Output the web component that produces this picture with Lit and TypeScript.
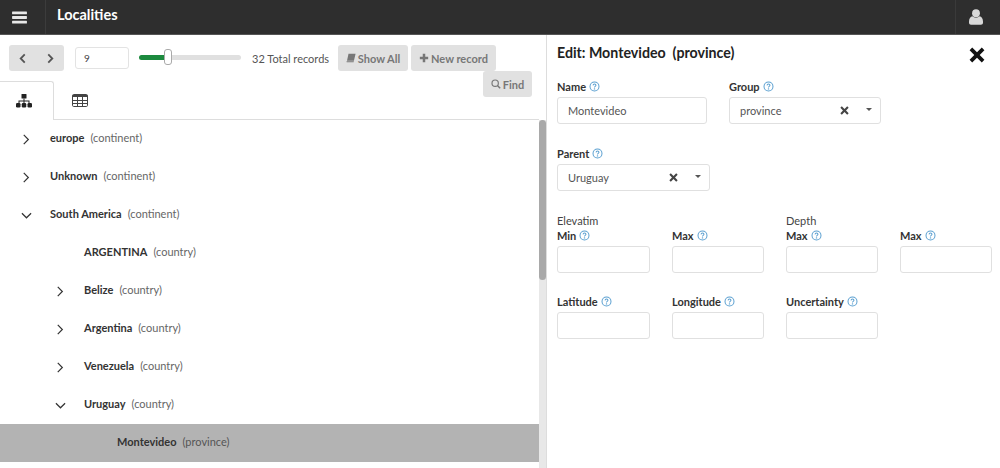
import { LitElement, css, html, svg } from 'lit';
import { customElement } from 'lit/decorators.js';

interface TreeRow {
  name: string;
  kind: string;
  depth: number;
  arrow?: 'right' | 'down';
  selected?: boolean;
}

const ROWS: TreeRow[] = [
  { name: 'europe', kind: 'continent', depth: 0, arrow: 'right' },
  { name: 'Unknown', kind: 'continent', depth: 0, arrow: 'right' },
  { name: 'South America', kind: 'continent', depth: 0, arrow: 'down' },
  { name: 'ARGENTINA', kind: 'country', depth: 1 },
  { name: 'Belize', kind: 'country', depth: 1, arrow: 'right' },
  { name: 'Argentina', kind: 'country', depth: 1, arrow: 'right' },
  { name: 'Venezuela', kind: 'country', depth: 1, arrow: 'right' },
  { name: 'Uruguay', kind: 'country', depth: 1, arrow: 'down' },
  { name: 'Montevideo', kind: 'province', depth: 2, selected: true },
];

const help = html`<svg class="help" viewBox="0 0 12 12" width="11" height="11">
  <circle cx="6" cy="6" r="4.9" fill="none" stroke="#5a9fd0" stroke-width="1.1"></circle>
  <path d="M4.400 4.800C4.500 3.800 5.200 3.400 6 3.400c1 0 1.600.6 1.600 1.300 0 1.200-1.600 1.200-1.600 2.300" fill="none" stroke="#5a9fd0" stroke-width="1.100"></path>
  <circle cx="6" cy="8.600" r=".8" fill="#5a9fd0"></circle>
</svg>`;

const timesPath = svg`<path d="M3.200 0.600 8 5.200 12.800 0.600 15.400 3.200 10.700 8 15.400 12.800 12.800 15.400 8 10.700 3.200 15.400 0.600 12.800 5.300 8 0.600 3.200Z"></path>`;

@customElement('app-root')
export class AppRoot extends LitElement {
  static override styles = css`
    :host {
      display: flex;
      flex-direction: column;
      height: 468px;
      overflow: hidden;
      font-family: 'Lato', sans-serif;
      font-size: 11px;
      color: #333;
      background: #fff;
    }

    .topbar {
      flex: none;
      height: 34px;
      display: flex;
      align-items: center;
      background: #2e2e2e;
      border-bottom: 1px solid #555;
      color: #fff;
    }
    .burger {
      width: 46px;
      height: 100%;
      display: flex;
      align-items: center;
      justify-content: center;
      padding-right: 6px;
      border-right: 1px solid #3c3c3c;
      box-sizing: border-box;
    }
    .title {
      flex: 1;
      padding-left: 11px;
      font-size: 14.500px;
      font-weight: 700;
      margin-top: -5px;
    }
    .account {
      width: 45px;
      height: 100%;
      display: flex;
      align-items: center;
      justify-content: center;
      padding-right: 5px;
      box-sizing: border-box;
      border-left: 1px solid #3a3a3a;
    }

    .main {
      flex: 1;
      display: flex;
      min-height: 0;
    }
    .left {
      flex: none;
      width: 546px;
      display: flex;
      flex-direction: column;
      border-right: 1px solid #ddd;
    }

    .toolbar {
      flex: none;
      display: flex;
      align-items: center;
      height: 26px;
      padding: 10px 0 0 9px;
    }
    .nav {
      width: 55px;
      height: 26px;
      display: flex;
      align-items: center;
      justify-content: space-between;
      padding: 0 9px;
      box-sizing: border-box;
      background: #e1e1e1;
      border-radius: 3px;
    }
    .page {
      width: 54px;
      height: 22px;
      margin-left: 11px;
      padding-left: 8px;
      box-sizing: border-box;
      display: flex;
      align-items: center;
      font-size: 10px;
      color: #444;
      border: 1px solid #e3e3e3;
      border-radius: 3px;
    }
    .slider {
      width: 102px;
      height: 16px;
      margin-left: 10px;
      margin-top: -2px;
      display: flex;
      align-items: center;
    }
    .slider .fill {
      width: 25px;
      height: 5px;
      background: #1c8a3e;
      border-radius: 3px 0 0 3px;
    }
    .slider .thumb {
      flex: none;
      width: 8px;
      height: 16px;
      box-sizing: border-box;
      background: #fff;
      border: 1px solid #aaa;
      border-radius: 3px;
    }
    .slider .rest {
      flex: 1;
      height: 5px;
      background: #e0e0e0;
      border-radius: 0 3px 3px 0;
    }
    .total {
      margin-left: 11px;
      width: 86px;
      color: #555;
      white-space: nowrap;
    }
    .btn {
      height: 26px;
      display: flex;
      align-items: center;
      justify-content: center;
      gap: 2px;
      box-sizing: border-box;
      background: #e1e1e1;
      border-radius: 3px;
      font-weight: 700;
      color: #777;
      white-space: nowrap;
    }
    .show {
      width: 70px;
    }
    .new {
      width: 85px;
      margin-left: 3px;
    }
    .find-row {
      flex: none;
      display: flex;
      justify-content: flex-end;
      padding-right: 14px;
      height: 26px;
      position: relative;
      z-index: 1;
    }
    .find {
      width: 49px;
    }

    .tabs {
      flex: none;
      display: flex;
      height: 38px;
      margin-top: -16px;
      margin-right: 7px;
      border-bottom: 1px solid #ddd;
    }
    .tab {
      width: 54px;
      height: 39px;
      box-sizing: border-box;
      display: flex;
      align-items: center;
      justify-content: center;
    }
    .tab.active {
      padding-right: 6px;
      background: #fff;
      border-top: 1px solid #ddd;
      border-right: 1px solid #ddd;
      border-radius: 0 3px 0 0;
    }
    .tab.plain {
      width: 52px;
    }

    .tree-wrap {
      flex: 1;
      display: flex;
      min-height: 0;
    }
    .tree {
      flex: 1;
      min-width: 0;
    }
    .rail {
      flex: none;
      width: 7px;
      background: #e8e8e8;
    }
    .rail div {
      height: 160px;
      background: #a9a9a9;
      border-radius: 4px;
    }
    .row {
      height: 38px;
      box-sizing: border-box;
      padding-bottom: 3px;
      display: flex;
      align-items: center;
      color: #666;
    }
    .row.selected {
      background: #b3b3b3;
      color: #555;
    }
    .row .arrow {
      flex: none;
      width: 50px;
      margin-top: 4px;
      display: flex;
      justify-content: center;
      padding-left: 2px;
      box-sizing: border-box;
    }
    .d1 {
      padding-left: 34px;
    }
    .d2 {
      padding-left: 67px;
    }
    .row .name {
      font-weight: 700;
      color: #333;
      margin-right: 6px;
    }

    .right {
      flex: 1;
      min-width: 0;
      padding: 0 8px 0 10px;
    }
    .heading {
      display: flex;
      justify-content: space-between;
      align-items: center;
      height: 36px;
      padding-top: 1px;
      margin-bottom: 7px;
    }
    .heading h2 {
      margin: -4px 0 0;
      font-size: 14.200px;
      font-weight: 700;
      color: #222;
      white-space: pre;
    }
    .heading svg {
      margin-right: 7px;
      margin-top: 1px;
    }
    .form-row {
      display: flex;
      gap: 22px;
    }
    .field label {
      height: 14px;
      display: flex;
      align-items: center;
      gap: 3px;
      font-weight: 700;
      color: #333;
      white-space: nowrap;
    }
    .box {
      height: 27px;
      margin-top: 4px;
      box-sizing: border-box;
      border: 1px solid #e0e0e0;
      border-radius: 3px;
      display: flex;
      align-items: center;
      padding: 0 10px;
      color: #555;
    }
    .box .value {
      flex: 1;
    }
    .box .caret {
      width: 0;
      height: 0;
      margin: 0 -2px 3px 17px;
      border-left: 3px solid transparent;
      border-right: 3px solid transparent;
      border-top: 3px solid #555;
    }
    .parent {
      margin-top: 22px;
    }
    .grid {
      display: grid;
      grid-template-columns: 93px 92px 92px 92px;
      column-gap: 22px;
      margin-top: 22px;
    }
    .group-title {
      height: 15px;
      color: #444;
      display: flex;
      align-items: center;
    }
    .spacer {
      height: 15px;
    }
    .grid-second {
      margin-top: 21px;
    }
  `;

  private arrow(dir?: 'right' | 'down') {
    if (!dir) return html`<span class="arrow"></span>`;
    const d = dir === 'right' ? 'M3 1 8 6 3 11' : 'M1 3.500 6 8.500 11 3.500';
    return html`<span class="arrow"
      ><svg viewBox="0 0 12 12" width="11" height="11">
        <path d=${d} fill="none" stroke="#333" stroke-width="1.300"></path></svg
    ></span>`;
  }

  private row(r: TreeRow) {
    return html`<div class="row d${r.depth} ${r.selected ? 'selected' : ''}">
      ${this.arrow(r.arrow)}
      <span class="name">${r.name}</span>
      <span>(${r.kind})</span>
    </div>`;
  }

  private select(value: string, width: number) {
    return html`<div class="box" style="width:${width}px">
      <span class="value">${value}</span>
      <svg viewBox="0 0 16 16" width="9" height="9" fill="#444">${timesPath}</svg>
      <span class="caret"></span>
    </div>`;
  }

  private topbar() {
    return html`<div class="topbar">
      <div class="burger">
        <svg viewBox="0 0 16 14" width="15" height="13" fill="#e8e8e8">
          <rect y="0.500" width="16" height="3" rx=".6"></rect>
          <rect y="5.500" width="16" height="3" rx=".6"></rect>
          <rect y="10.500" width="16" height="3" rx=".6"></rect>
        </svg>
      </div>
      <div class="title">Localities</div>
      <div class="account">
        <svg viewBox="0 0 14 16" width="14" height="16" fill="#d8d8d8">
          <circle cx="7" cy="4.200" r="3.900"></circle>
          <path d="M3.400 7.200C4.400 8.100 5.600 8.600 7 8.600s2.600-.5 3.600-1.400C12.600 7.600 14 9.600 14 12.400v1.400c0 1.200-.9 2-2 2H2c-1.100 0-2-.8-2-2v-1.400C0 9.600 1.400 7.600 3.400 7.200Z"></path>
        </svg>
      </div>
    </div>`;
  }

  private toolbar() {
    return html`<div class="toolbar">
        <div class="nav">
          <svg viewBox="0 0 10 12" width="9" height="11"><path d="M7.500 1.500 3 6l4.500 4.500" fill="none" stroke="#555" stroke-width="2"></path></svg>
          <svg viewBox="0 0 10 12" width="9" height="11"><path d="M2.500 1.500 7 6l-4.500 4.500" fill="none" stroke="#555" stroke-width="2"></path></svg>
        </div>
        <div class="page">9</div>
        <div class="slider"><div class="fill"></div><div class="thumb"></div><div class="rest"></div></div>
        <div class="total">32 Total records</div>
        <div class="btn show">
          <svg viewBox="0 0 12 12" width="10" height="10" fill="#777"><path d="M3 .8h8.500l-2 8.400H1.200L3 .8ZM.8 9.800h8.600l-.2 1.400H1.500C.6 11.200.4 10.400.8 9.800Z"></path></svg>
          Show All
        </div>
        <div class="btn new">
          <svg viewBox="0 0 12 12" width="10" height="10" fill="#777"><path d="M4.500 1h3v3.500H11v3H7.500V11h-3V7.500H1v-3h3.500Z"></path></svg>
          New record
        </div>
      </div>
      <div class="find-row">
        <div class="btn find">
          <svg viewBox="0 0 12 12" width="10" height="10"><circle cx="5" cy="5" r="3.800" fill="none" stroke="#777" stroke-width="1.400"></circle><path d="M8 8l3 3" stroke="#777" stroke-width="1.800"></path></svg>
          Find
        </div>
      </div>`;
  }

  private tabs() {
    return html`<div class="tabs">
      <div class="tab active">
        <svg viewBox="0 0 16 14" width="16" height="14" fill="#222">
          <rect x="5.500" y="0" width="5" height="4.500" rx=".6"></rect>
          <path d="M7.500 4.500h1V6.500h5V9h-1V7.500h-4V9h-1V7.500h-4V9h-1V6.500h5Z"></path>
          <rect x="0" y="9" width="4.500" height="4.500" rx="1.200"></rect>
          <rect x="5.750" y="9" width="4.500" height="4.500" rx="1.200"></rect>
          <rect x="11.500" y="9" width="4.500" height="4.500" rx="1.200"></rect>
        </svg>
      </div>
      <div class="tab plain">
        <svg viewBox="0 0 16 13" width="16" height="13" fill="none" stroke="#444" stroke-width="1">
          <rect x=".5" y=".5" width="15" height="12" rx="1.200"></rect>
          <path d="M.5 2h15" stroke-width="2"></path>
          <path d="M.5 6.500h15M.5 9.500h15M5.500 3v9M10.500 3v9"></path>
        </svg>
      </div>
    </div>`;
  }

  private form() {
    return html`<div class="heading">
        <h2>Edit: Montevideo  (province)</h2>
        <svg viewBox="0 0 16 16" width="16" height="16" fill="#111">${timesPath}</svg>
      </div>
      <div class="form-row">
        <div class="field">
          <label>Name ${help}</label>
          <div class="box" style="width:150px">Montevideo</div>
        </div>
        <div class="field">
          <label>Group ${help}</label>
          ${this.select('province', 152)}
        </div>
      </div>
      <div class="field parent">
        <label>Parent ${help}</label>
        ${this.select('Uruguay', 153)}
      </div>
      <div class="grid">
        <div class="group-title">Elevatim</div>
        <div class="spacer"></div>
        <div class="group-title">Depth</div>
        <div class="spacer"></div>
        ${['Min', 'Max', 'Max', 'Max'].map(
          (l) => html`<div class="field"><label>${l} ${help}</label><div class="box"></div></div>`
        )}
      </div>
      <div class="grid grid-second">
        ${['Latitude', 'Longitude', 'Uncertainty'].map(
          (l) => html`<div class="field"><label>${l} ${help}</label><div class="box"></div></div>`
        )}
      </div>`;
  }

  protected override render() {
    return html`
      ${this.topbar()}
      <div class="main">
        <div class="left">
          ${this.toolbar()} ${this.tabs()}
          <div class="tree-wrap">
            <div class="tree">${ROWS.map((r) => this.row(r))}</div>
            <div class="rail"><div></div></div>
          </div>
        </div>
        <div class="right">${this.form()}</div>
      </div>
    `;
  }
}
